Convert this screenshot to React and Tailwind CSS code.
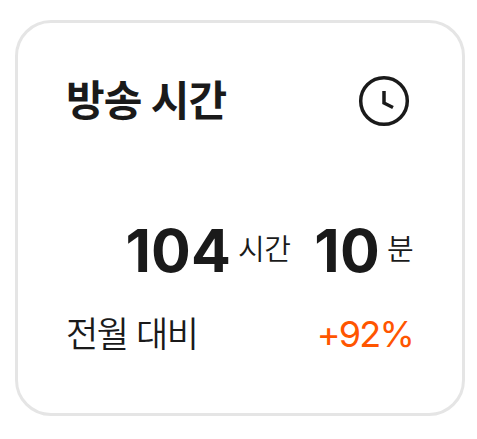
function Amount({ value, unit }) {
    return (
        <div className="flex items-center gap-[7px]">
            <span className="text-[59px] font-bold leading-none tracking-[0.003em]">{value}</span>
            <span className="relative -top-px text-[29px] font-[350] leading-none tracking-[-0.02em]">{unit}</span>
        </div>
    );
}

export default function App() {
    return (
        <div className="h-screen bg-white pt-5 pr-3 pb-[23px] pl-[15px] text-[#1a1a1a] font-[Inter,'Noto_Sans_CJK_KR',sans-serif]">
            <div className="flex h-full flex-col rounded-[36px] border-3 border-[#e5e5e5] pt-[52px] pr-[49px] pl-12">
                <div className="flex h-[52px] items-center justify-between">
                    <h2 className="text-[42px] font-bold leading-none tracking-[-0.02em]">방송 시간</h2>
                    <svg className="mr-0.5 size-[54px]" viewBox="0 0 54 54" fill="none" stroke="currentColor" strokeWidth="3.5">
                        <circle cx="27" cy="27" r="23.3" />
                        <path d="M27 17v12l9 4.5" />
                    </svg>
                </div>

                <div className="mt-[94px] flex items-center justify-end gap-6">
                    <Amount value="104" unit="시간" />
                    <Amount value="10" unit="분" />
                </div>

                <div className="mt-9 flex items-center justify-between leading-none">
                    <span className="text-[35px] font-[350] tracking-[-0.04em]">전월 대비</span>
                    <span className="text-[36px] tracking-[-0.05em] text-[#ff5500]">+92%</span>
                </div>
            </div>
        </div>
    );
}
